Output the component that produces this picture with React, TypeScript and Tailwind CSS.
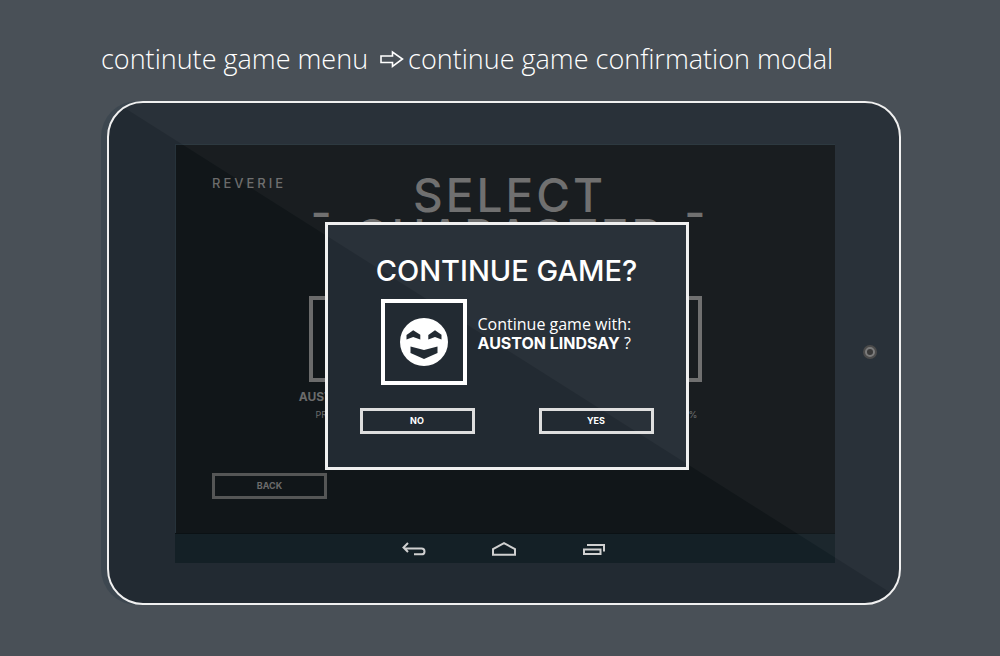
import React from "react";

type Slot = { name: string; progress: string };

const slots: Slot[] = [
  { name: "AUSTON LINDSAY", progress: "PROGRESS: 30%" },
  { name: "NEW", progress: "PROGRESS: 100%" },
];

function ArrowIcon() {
  return (
    <svg width="24" height="20" viewBox="0 0 24 20" fill="none" stroke="white" strokeWidth="1.6" aria-hidden="true">
      <path d="M1 7H12.500V3L22.500 10L12.500 17.500V13.500H1Z" />
    </svg>
  );
}

function FaceIcon() {
  return (
    <svg width="50" height="50" viewBox="0 0 50 50" aria-hidden="true">
      <circle cx="25" cy="25" r="24" fill="white" />
      <g fill="#222a32">
        <path d="M7.500 18L14.200 13.200L21.300 17.800V22.500L14.200 20L7.500 22.500Z" />
        <path d="M29.300 18L36 13.200L42.500 17.800V22.500L36 20L29.300 22.500Z" />
        <path d="M11.500 29.500L25 33L38.500 29.500V36L25 42L11.500 36Z" />
      </g>
    </svg>
  );
}

function OutlineButton({ children, dim }: { children: string; dim?: boolean }) {
  return (
    <button
      type="button"
      className={
        dim
          ? "h-[26px] w-[115px] border-[3px] border-[#555656] text-[9px] font-bold text-[#6b6b6b]"
          : "h-[26px] w-[115px] border-[3px] border-[#dedede] text-[9px] font-bold text-white"
      }
    >
      {children}
    </button>
  );
}

function Modal() {
  return (
    <div className="absolute inset-0 flex items-start justify-center pt-[77px] pl-[2px]">
      <div
        role="dialog"
        aria-labelledby="confirm-title"
        className="flex w-[364px] flex-col border-[3px] border-[#f0f0f0] bg-[#222a32] px-8 pt-7 pb-[33px] text-white"
      >
        <h2 id="confirm-title" className="text-center text-[29px] leading-[36px] font-medium whitespace-nowrap">
          CONTINUE GAME?
        </h2>
        <div className="mt-[10px] flex items-start gap-[11px] pl-[21px]">
          <div className="relative z-20 flex size-[86px] shrink-0 items-center justify-center border-4 border-white bg-[#222a32]">
            <FaceIcon />
          </div>
          <p className="pt-4 font-['Open_Sans',sans-serif] text-base leading-[19px] whitespace-nowrap">
            <span>Continue game with:</span>
            <br />
            <strong className="font-['Inter',sans-serif] text-base leading-[19px] font-bold">AUSTON LINDSAY</strong>
            <span> ?</span>
          </p>
        </div>
        <div className="mt-[23px] flex justify-between">
          <OutlineButton>NO</OutlineButton>
          <OutlineButton>YES</OutlineButton>
        </div>
      </div>
    </div>
  );
}

function SelectScreen() {
  return (
    <section className="relative flex h-[389px] flex-col border-t border-l border-[#26323a] bg-[#111619] px-9 pb-[34px] text-[#6b6b6b]">
      <p className="mt-7 text-[13px] leading-5 font-medium tracking-[3px]">REVERIE</p>
      <div className="-mt-[18px] flex items-center justify-center gap-5 pl-2 text-[46px] leading-[41px] font-medium tracking-[3px]">
        <span className="pb-2">-</span>
        <h1 className="text-center">
          SELECT
          <br />
          CHARACTER
        </h1>
        <span className="pb-2">-</span>
      </div>
      <ul className="mt-[39px] flex justify-center gap-[203px]">
        {slots.map((slot) => (
          <li key={slot.name} className="flex w-[104px] flex-col items-center whitespace-nowrap">
            <span className="size-[86px] border-4 border-[#6b6b6b]" />
            <span className="mt-[5px] text-[12px] leading-5 font-bold">{slot.name}</span>
            <span className="text-[9px] leading-4">{slot.progress}</span>
          </li>
        ))}
      </ul>
      <div className="mt-auto flex">
        <OutlineButton dim>BACK</OutlineButton>
      </div>
      <Modal />
    </section>
  );
}

function NavBar() {
  return (
    <nav className="flex h-[30px] items-center justify-center gap-[65px] border-t border-[#0b1114] bg-[#142026] pr-0.5 text-[#d0d0d0]">
      <button type="button" aria-label="Back">
        <svg width="24" height="14" viewBox="0 0 24 14" fill="none" stroke="currentColor" strokeWidth="2">
          <path d="M6 1L1.500 5.500L6 10M2 6.500H19.500Q22.500 6.500 22.500 9.400Q22.500 12.300 19.500 12.300H12" />
        </svg>
      </button>
      <button type="button" aria-label="Home">
        <svg width="26" height="14" viewBox="0 0 26 14" fill="none" stroke="currentColor" strokeWidth="2">
          <path d="M2 12.800V7L13 1.200L24 7V12.800Z" />
        </svg>
      </button>
      <button type="button" aria-label="Recent apps">
        <svg width="24" height="14" viewBox="0 0 24 14" fill="none" stroke="currentColor" strokeWidth="2">
          <path d="M2 7.500H18.500V12H2Z M5 3H22V9.500" />
        </svg>
      </button>
    </nav>
  );
}

export default function App() {
  return (
    <main className="min-h-screen bg-[#495057] pt-10 pr-[99px] pb-12 pl-[107px] font-['Inter',sans-serif]">
      <p className="-ml-1.5 flex items-center font-['Open_Sans',sans-serif] text-[27px] leading-[38px] font-light whitespace-nowrap text-white">
        <span className="mr-3">continute game menu</span>
        <ArrowIcon />
        <span className="ml-1">continue game confirmation modal</span>
      </p>
      <div className="relative mt-[23px] flex items-center rounded-[36px] border-2 border-[#f0f0f0] bg-[#222a32] pt-[41px] pr-[22px] pb-10 pl-[66px] shadow-[-6px_0_0_#3d4750]">
        <div className="flex-1">
          <SelectScreen />
          <NavBar />
        </div>
        <div className="mb-1 ml-7 flex size-[14px] items-center justify-center rounded-full bg-[#454545]">
          <span className="size-2.5 rounded-full border-2 border-[#777] bg-[#333]" />
        </div>
        <div className="pointer-events-none absolute inset-0 z-10 rounded-[34px] bg-white/[0.032] [clip-path:polygon(1%_0,100%_0,100%_99%)]" />
      </div>
    </main>
  );
}
